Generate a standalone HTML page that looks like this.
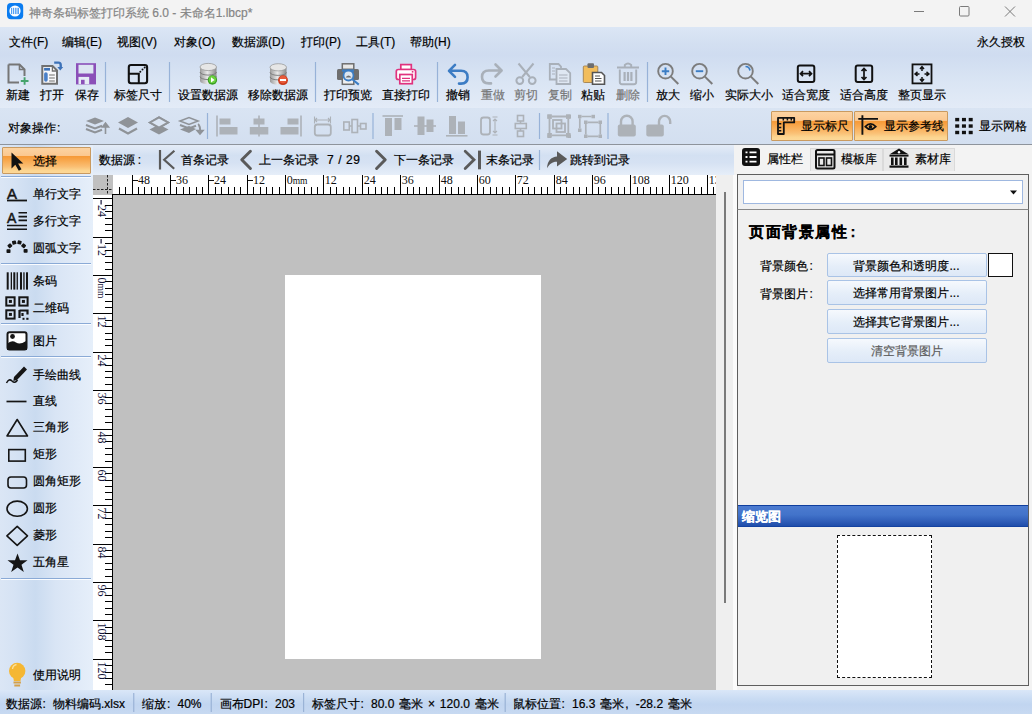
<!DOCTYPE html><html><head><meta charset="utf-8"><style>
html,body{margin:0;padding:0;width:1032px;height:714px;overflow:hidden;font-family:"Liberation Sans", sans-serif;background:#dde7f4;position:relative}
.t{position:absolute;white-space:nowrap;-webkit-text-stroke:0.2px currentColor}.b{position:absolute}.c{display:inline-block;width:5px}
svg{position:absolute;left:0;top:0}
</style></head><body>
<div class="b" style="left:0px;top:0px;width:1032px;height:27px;background:#f3f3f3"></div>
<div class="b" style="left:0px;top:27px;width:1032px;height:28px;background:linear-gradient(#dbe6f5,#d3dff1 60%,#cfdcf0)"></div>
<div class="b" style="left:0px;top:55px;width:1032px;height:53px;background:linear-gradient(#cfdcf0,#dae5f4 50%,#e3ebf7)"></div>
<div class="b" style="left:0px;top:108px;width:1032px;height:36px;background:linear-gradient(#d9e4f3,#d3dff0)"></div>
<div class="b" style="left:0px;top:144px;width:1032px;height:1px;background:#8e949c"></div>
<div class="b" style="left:0px;top:145px;width:1032px;height:545px;background:#dde7f4"></div>
<div class="b" style="left:0px;top:145px;width:93px;height:545px;background:linear-gradient(90deg,#dbe6f5 0%,#d6e3f4 15%,#cadbf0 38%,#d9e5f5 60%,#e1ebf8 85%,#e6effa 100%)"></div>
<div class="b" style="left:93px;top:145px;width:641px;height:30px;background:linear-gradient(#e4ecf7 0%,#d3e0f2 35%,#d6e2f3 60%,#e6eef9 100%)"></div>
<div class="b" style="left:113px;top:194px;width:603px;height:496px;background:#c0c0c0"></div>
<div class="b" style="left:716px;top:175px;width:18px;height:515px;background:#efefef"></div>
<div class="b" style="left:734px;top:145px;width:298px;height:545px;background:#f3f3f3"></div>
<div class="b" style="left:0px;top:690px;width:1032px;height:24px;background:linear-gradient(#dae7f8 0%,#cadcf3 35%,#c1d5f0 60%,#c7d9f1 100%)"></div>
<div class="b" style="left:770.5px;top:110.5px;width:82px;height:30.5px;background:linear-gradient(#fcd3a2 0%,#fbc890 30%,#f69a38 34%,#f8a84e 50%,#fabf74 75%,#fcd590 90%,#fdd898 100%);border:1px solid #c99a60;box-sizing:border-box;border-radius:1px"></div>
<div class="b" style="left:853.5px;top:110.5px;width:94px;height:30.5px;background:linear-gradient(#fcd3a2 0%,#fbc890 30%,#f69a38 34%,#f8a84e 50%,#fabf74 75%,#fcd590 90%,#fdd898 100%);border:1px solid #c99a60;box-sizing:border-box;border-radius:1px"></div>
<div class="b" style="left:1.5px;top:147.3px;width:89px;height:26.3px;background:linear-gradient(#fcd3a2 0%,#fbc890 30%,#f69a38 34%,#f8a84e 50%,#fabf74 75%,#fcd590 90%,#fdd898 100%);border:1px solid #c99a60;box-sizing:border-box;border-radius:1px"></div>
<div class="b" style="left:810px;top:147.5px;width:72.5px;height:23px;background:#eaeaea;border:1px solid #dadada;border-bottom:none;box-sizing:border-box"></div>
<div class="b" style="left:882.5px;top:147.5px;width:72px;height:23px;background:#eaeaea;border:1px solid #dadada;border-bottom:none;box-sizing:border-box"></div>
<div class="b" style="left:737px;top:174px;width:292px;height:512px;border:1px solid #5e5e5e;box-sizing:border-box;background:#f0f0f0"></div>
<div class="b" style="left:743px;top:180px;width:280px;height:24px;border:1px solid #9fb8e0;box-sizing:border-box;background:#fff"></div>
<div class="b" style="left:826.5px;top:252.5px;width:160.5px;height:24.5px;border:1px solid #a9c3e6;box-sizing:border-box;border-radius:2px;background:linear-gradient(#f6f9fd,#e5eef9 55%,#dde8f7)"></div>
<div class="b" style="left:826.5px;top:280.3px;width:160.5px;height:24.5px;border:1px solid #a9c3e6;box-sizing:border-box;border-radius:2px;background:linear-gradient(#f6f9fd,#e5eef9 55%,#dde8f7)"></div>
<div class="b" style="left:826.5px;top:309.2px;width:160.5px;height:24.5px;border:1px solid #a9c3e6;box-sizing:border-box;border-radius:2px;background:linear-gradient(#f6f9fd,#e5eef9 55%,#dde8f7)"></div>
<div class="b" style="left:826.5px;top:338px;width:160.5px;height:24.5px;border:1px solid #a9c3e6;box-sizing:border-box;border-radius:2px;background:linear-gradient(#f6f9fd,#e5eef9 55%,#dde8f7)"></div>
<div class="b" style="left:988px;top:252.5px;width:25px;height:24.5px;border:1.3px solid #111;box-sizing:border-box;background:#fff"></div>
<div class="b" style="left:738px;top:505px;width:290px;height:22px;background:linear-gradient(#0f3e9e 0,#0f3e9e 1px,#4c7bd0 1px,#4273ca 45%,#2f5db8 75%,#1f4eab 95%,#0a3898 100%)"></div>
<div class="b" style="left:836.5px;top:535px;width:95px;height:143px;border:1.3px dashed #111;box-sizing:border-box;background:#fff"></div>
<svg width="1032" height="714" viewBox="0 0 1032 714">
<rect x="7" y="3" width="16.2" height="16.2" rx="4" fill="#0a7cf0"/><circle cx="15" cy="11" r="5.6" fill="#fff"/><path d="M11.6 7.8v6.3M13.4 7.8v6.3M15.3 7.8v6.3M17 7.8v6.3M18.4 7.8v6.3" stroke="#2a8af2" stroke-width="0.9"/>
<path d="M914 11.5h10" stroke="#7a7a7a" stroke-width="1"/><rect x="959.5" y="6.5" width="9.5" height="9.5" rx="1" fill="none" stroke="#7a7a7a" stroke-width="1"/><path d="M1005 6.5l10 10M1015 6.5l-10 10" stroke="#7a7a7a" stroke-width="1"/>
<path d="M105.5 62v40" stroke="#97b2d8" stroke-width="1.2"/>
<path d="M169.5 62v40" stroke="#97b2d8" stroke-width="1.2"/>
<path d="M315.5 62v40" stroke="#97b2d8" stroke-width="1.2"/>
<path d="M437.5 62v40" stroke="#97b2d8" stroke-width="1.2"/>
<path d="M647.5 62v40" stroke="#97b2d8" stroke-width="1.2"/>
<path d="M8.5 64.5H19.5L24.5 69.5V76M19 82.5H8.5V64.5" fill="none" stroke="#767676" stroke-width="2"/><path d="M19.5 64.5V69.5H24.5" fill="none" stroke="#767676" stroke-width="1.6"/><path d="M20.8 81H28.5M24.6 77.2V84.8" stroke="#46a46c" stroke-width="1.9"/>
<path d="M42.3 65.9H52.5L57 70.5V83.7H42.3Z" fill="#f8f8fa" stroke="#707070" stroke-width="2"/><path d="M52.4 66V71H57" fill="none" stroke="#707070" stroke-width="1.3"/><rect x="44.1" y="67.9" width="5.9" height="2.7" fill="#3d72b8"/><rect x="44.1" y="72.3" width="3.6" height="9.4" rx="1.8" fill="#4a80c8"/><path d="M49.1 75H54.8M49.1 78.1H54.8M49.1 80.9H54.8" stroke="#9c9c9c" stroke-width="1.5"/><path d="M54.2 62.6H58.5Q60.7 62.6 60.7 65V67.5" fill="none" stroke="#3d72b8" stroke-width="2.4"/><path d="M57.3 67H63.2L60.25 70.6Z" fill="#3d72b8"/>
<rect x="76" y="63.2" width="20" height="21.2" fill="#8b4fb8"/><rect x="78.5" y="64.8" width="14.9" height="8.7" fill="#dde5f2"/><rect x="78.5" y="76.9" width="10.7" height="7.3" fill="#e6ecf5"/><rect x="81" y="79.8" width="3.6" height="4.4" fill="#8b4fb8"/>
<rect x="128.8" y="65" width="18.3" height="18.2" rx="2.2" fill="none" stroke="#111" stroke-width="2.1"/><path d="M128.5 73.8H138.8V84" fill="none" stroke="#111" stroke-width="2"/><circle cx="144.7" cy="67.4" r="1" fill="#111"/><circle cx="142.5" cy="69.6" r="1" fill="#111"/><circle cx="140.3" cy="71.8" r="1" fill="#111"/>
<defs><linearGradient id="dbg200" x1="0" x2="1"><stop offset="0" stop-color="#9a9a9a"/><stop offset="0.45" stop-color="#e8e8e8"/><stop offset="1" stop-color="#8a8a8a"/></linearGradient></defs><path d="M200 67v14a8 3.2 0 0 0 16.5 0v-14Z" fill="url(#dbg200)"/><path d="M200 72a8 3 0 0 0 16.5 0M200 76.5a8 3 0 0 0 16.5 0" fill="none" stroke="#777" stroke-width="0.9"/><ellipse cx="208.25" cy="67" rx="8.25" ry="3.6" fill="#e6e6e6" stroke="#9a9a9a" stroke-width="0.8"/>
<circle cx="212.4" cy="80" r="4.7" fill="#3aa023"/><circle cx="212.4" cy="79.4" r="3.6" fill="#6cd040"/><path d="M211 77.3L214.6 79.9L211 82.5Z" fill="#fff"/>
<defs><linearGradient id="dbg270" x1="0" x2="1"><stop offset="0" stop-color="#9a9a9a"/><stop offset="0.45" stop-color="#e8e8e8"/><stop offset="1" stop-color="#8a8a8a"/></linearGradient></defs><path d="M270 67.3v14a8 3.2 0 0 0 16.5 0v-14Z" fill="url(#dbg270)"/><path d="M270 72.3a8 3 0 0 0 16.5 0M270 76.8a8 3 0 0 0 16.5 0" fill="none" stroke="#777" stroke-width="0.9"/><ellipse cx="278.25" cy="67.3" rx="8.25" ry="3.6" fill="#e6e6e6" stroke="#9a9a9a" stroke-width="0.8"/>
<circle cx="283" cy="80.2" r="4.9" fill="#c8381a"/><circle cx="283" cy="79.6" r="3.8" fill="#e85a3a"/><rect x="280" y="79" width="6" height="2" fill="#fff"/>
<rect x="342.3" y="63.8" width="11.5" height="5.5" fill="#e8e8e8" stroke="#6e6e6e" stroke-width="1.5"/><rect x="337" y="69" width="22" height="11" rx="1.5" fill="#6e6e6e"/><rect x="342" y="69.5" width="12" height="2.2" fill="#3b7dc4"/><rect x="342.3" y="74" width="11.5" height="10.3" fill="#f0f0f0" stroke="#6e6e6e" stroke-width="1.5"/><circle cx="348.5" cy="75.5" r="5" fill="#dde6f0" stroke="#3b7dc4" stroke-width="1.8"/><path d="M352.3 79.3L358.8 84.6" stroke="#3b7dc4" stroke-width="2"/><path d="M345.5 77.5q3-4 6 0" fill="#6e6e6e"/>
<rect x="400.8" y="64.6" width="10.5" height="5" fill="#fff" stroke="#e0327e" stroke-width="1.7"/><rect x="396.3" y="69.5" width="19.3" height="10" rx="2" fill="#fff" stroke="#e0327e" stroke-width="1.7"/><rect x="399.8" y="74.5" width="12.5" height="9.2" fill="#fff" stroke="#e0327e" stroke-width="1.7"/><path d="M402 78.3H410M402 80.8H410" stroke="#e0327e" stroke-width="1.3"/><rect x="411.8" y="71" width="1.6" height="1.6" fill="#e0327e"/>
<path d="M455 64.8L449 70.8L455 76.8M449.5 70.8H461Q467.6 70.8 467.6 77.2Q467.6 83.6 461 83.6H459" fill="none" stroke="#3c7cc4" stroke-width="2.6" stroke-linecap="round" stroke-linejoin="round"/>
<path d="M495.5 64.5L501.6 70.5L495.5 76.5M501 70.5H489Q482 70.5 482 77Q482 83.4 489 83.4H491" fill="none" stroke="#a9b0b9" stroke-width="2.6" stroke-linecap="round" stroke-linejoin="round"/>
<path d="M518.5 63.5L529.8 77M533.5 63.5L522.2 77" stroke="#a9b0b9" stroke-width="2"/><circle cx="519.8" cy="80.6" r="3.4" fill="none" stroke="#a9b0b9" stroke-width="2"/><circle cx="532.2" cy="80.6" r="3.4" fill="none" stroke="#a9b0b9" stroke-width="2"/>
<path d="M549.8 64H558.5L561 66.5V79.5H549.8Z" fill="none" stroke="#a9b0b9" stroke-width="1.8"/><path d="M552 68H555M552 71H555M552 74H555" stroke="#a9b0b9" stroke-width="1.2"/><path d="M556.5 69H566L570.2 73.2V84H556.5Z" fill="#dfe7f2" stroke="#a9b0b9" stroke-width="1.8"/><path d="M559 75H567.5M559 78H567.5M559 81H567.5" stroke="#a9b0b9" stroke-width="1.2"/>
<rect x="583.3" y="66" width="14.5" height="16.5" rx="1" fill="#f2bd5c" stroke="#a08050" stroke-width="0.9"/><rect x="587.5" y="63.2" width="6.5" height="4.8" rx="1" fill="#6e6e6e"/><path d="M592.5 72.5H601.5L604.5 75.5V84.2H592.5Z" fill="#fff" stroke="#555" stroke-width="1.6"/><path d="M595 76H600M595 78.5H601.5M595 81H601.5" stroke="#555" stroke-width="1.1"/>
<path d="M617 67.5H639M624.8 67.2V65Q628 61.8 631.2 65V67.2" fill="none" stroke="#a9b0b9" stroke-width="1.9"/><path d="M619.8 69.5V82Q619.8 84.2 622 84.2H634Q636.2 84.2 636.2 82V69.5" fill="none" stroke="#a9b0b9" stroke-width="1.9"/><path d="M624.6 72V81M628 72V81M631.4 72V81" stroke="#a9b0b9" stroke-width="2.2"/>
<circle cx="665.5" cy="71.2" r="7.3" fill="none" stroke="#7c7c7c" stroke-width="1.9"/><path d="M670.9 76.6L678.3 84" stroke="#7c7c7c" stroke-width="2"/><path d="M661.8 71.2H669.2M665.5 67.5V74.9" stroke="#3b7dc4" stroke-width="1.9"/>
<circle cx="699.5" cy="71.2" r="7.3" fill="none" stroke="#7c7c7c" stroke-width="1.9"/><path d="M704.9 76.6L712.3 84" stroke="#7c7c7c" stroke-width="2"/><path d="M695.8 71.2H703.2" stroke="#3b7dc4" stroke-width="1.9"/>
<circle cx="745.5" cy="71.2" r="7.3" fill="none" stroke="#7c7c7c" stroke-width="1.9"/><path d="M750.9 76.6L758.3 84" stroke="#7c7c7c" stroke-width="2"/><path d="M745.5 66.5A4.7 4.7 0 0 1 750 70.5" fill="none" stroke="#3b7dc4" stroke-width="1.7"/>
<rect x="797.8" y="65.5" width="16.5" height="16.5" rx="2" fill="none" stroke="#111" stroke-width="2"/><path d="M800.5 73.7H811.5M803 71.2L800.5 73.7L803 76.2M809 71.2L811.5 73.7L809 76.2" fill="none" stroke="#111" stroke-width="1.7"/>
<rect x="855.7" y="65.6" width="16.5" height="16.5" rx="2" fill="none" stroke="#111" stroke-width="2"/><path d="M864 68.5V79.5M861.5 71L864 68.5L866.5 71M861.5 77L864 79.5L866.5 77" fill="none" stroke="#111" stroke-width="1.7"/>
<rect x="912.5" y="64.4" width="19" height="19" fill="none" stroke="#111" stroke-width="1.8"/><path d="M922 67v4M920 69l2-2.4 2 2.4M922 77v4M920 79l2 2.4 2-2.4M915.5 73.9h4M917.5 71.9l-2.4 2 2.4 2M924.5 73.9h4M926.5 71.9l2.4 2-2.4 2" fill="none" stroke="#111" stroke-width="1.5"/>
<path d="M207.5 113v26" stroke="#97b2d8" stroke-width="1.2"/>
<path d="M373 113v26" stroke="#97b2d8" stroke-width="1.2"/>
<path d="M539.5 113v26" stroke="#97b2d8" stroke-width="1.2"/>
<path d="M608 113v26" stroke="#97b2d8" stroke-width="1.2"/>
<path d="M86 121L95 117.5L104 121L95 124.5Z" fill="#8f9398"/><path d="M86 125L95 128.5L102 125.8" fill="none" stroke="#8f9398" stroke-width="2"/><path d="M86 129L95 132.5L102 129.8" fill="none" stroke="#8f9398" stroke-width="2"/><path d="M105.5 134V124M102.5 127L105.5 123L108.5 127Z" fill="#8f9398" stroke="#8f9398" stroke-width="1.6"/>
<path d="M118 122.5L128 117L138 122.5L128 128Z" fill="#8f9398"/><path d="M119 128.5L128 133.5L137 128.5" fill="none" stroke="#8f9398" stroke-width="2.2"/>
<path d="M150 122.5L159 117.5L168 122.5L159 127.5Z" fill="none" stroke="#8f9398" stroke-width="2"/><path d="M149.5 129.5L159 124.5L168.5 129.5L159 134.5Z" fill="#8f9398"/><path d="M150 122.5L159 117.5L168 122.5L159 127.5Z" fill="#dbe5f3" stroke="#8f9398" stroke-width="2"/>
<path d="M180 121L189 117.5L198 121L189 124.5Z" fill="none" stroke="#8f9398" stroke-width="1.6"/><path d="M180 125L189 128.5L196 125.8" fill="none" stroke="#8f9398" stroke-width="2"/><path d="M180 129.5L189 126L196 129L189 133Z" fill="#8f9398"/><path d="M198 124Q201 126 200 133M197 130.5L200 134L203 130.5Z" fill="#8f9398" stroke="#8f9398" stroke-width="1.6"/>
<path d="M217 115.5V136.5" stroke="#adb2b8" stroke-width="1.6"/><rect x="219.5" y="118.5" width="11" height="6" fill="#adb2b8"/><rect x="219.5" y="127" width="18" height="7.5" fill="#adb2b8"/>
<path d="M259 115.5V136.5" stroke="#adb2b8" stroke-width="1.6"/><rect x="253.5" y="118.5" width="11" height="6" fill="#adb2b8"/><rect x="249.8" y="127" width="18.5" height="7.5" fill="#adb2b8"/>
<path d="M301 115.5V136.5" stroke="#adb2b8" stroke-width="1.6"/><rect x="287.5" y="118.5" width="11" height="6" fill="#adb2b8"/><rect x="280.5" y="127" width="18" height="7.5" fill="#adb2b8"/>
<path d="M315 120H330M317 118L315 120L317 122M328 118L330 120L328 122M314.5 116.5V123.5M330.5 116.5V123.5" fill="none" stroke="#adb2b8" stroke-width="1.1"/><rect x="314.8" y="124.5" width="16" height="11" rx="2.5" fill="none" stroke="#adb2b8" stroke-width="1.8"/>
<rect x="343.8" y="122" width="5.5" height="8" fill="none" stroke="#adb2b8" stroke-width="1.6"/><rect x="352" y="119.5" width="5.5" height="13" fill="none" stroke="#adb2b8" stroke-width="1.6"/><rect x="360.5" y="123.5" width="5.5" height="5.5" fill="none" stroke="#adb2b8" stroke-width="1.6"/><path d="M349.3 126H352M357.5 126H360.5" stroke="#adb2b8" stroke-width="1.6"/>
<path d="M382.5 116H403" stroke="#adb2b8" stroke-width="1.6"/><rect x="385" y="118" width="7" height="18" fill="#adb2b8"/><rect x="394.5" y="118" width="7" height="12" fill="#adb2b8"/>
<path d="M414 126H436" stroke="#adb2b8" stroke-width="1.6"/><rect x="417.5" y="116.5" width="7" height="18.5" fill="#adb2b8"/><rect x="426.5" y="119.5" width="7" height="12.5" fill="#adb2b8"/>
<path d="M446 135.8H467.5" stroke="#adb2b8" stroke-width="1.6"/><rect x="449" y="116" width="7" height="18" fill="#adb2b8"/><rect x="458" y="121.5" width="7" height="12.5" fill="#adb2b8"/>
<rect x="481" y="117.5" width="9" height="17" rx="2.5" fill="none" stroke="#adb2b8" stroke-width="1.8"/><path d="M495 119V133M493 121L495 119L497 121M493 131L495 133L497 131M492.5 117H497.5M492.5 135H497.5" fill="none" stroke="#adb2b8" stroke-width="1.1"/>
<rect x="517.5" y="115.5" width="6" height="5.5" fill="none" stroke="#adb2b8" stroke-width="1.6"/><rect x="515.3" y="123.5" width="11" height="5" fill="none" stroke="#adb2b8" stroke-width="1.6"/><rect x="517.5" y="131" width="6" height="5.5" fill="none" stroke="#adb2b8" stroke-width="1.6"/><path d="M520.5 121V123.5M520.5 128.5V131" stroke="#adb2b8" stroke-width="1.6"/>
<rect x="547.5" y="114.8" width="3.5" height="3.5" fill="#adb2b8"/><rect x="567.5" y="114.8" width="3.5" height="3.5" fill="#adb2b8"/><rect x="547.5" y="134.5" width="3.5" height="3.5" fill="#adb2b8"/><rect x="567.5" y="134.5" width="3.5" height="3.5" fill="#adb2b8"/><rect x="547.3" y="114.3" width="4.6" height="4.6" fill="#adb2b8"/><rect x="566" y="114.3" width="4.6" height="4.6" fill="#adb2b8"/><rect x="547.3" y="133" width="4.6" height="4.6" fill="#adb2b8"/><rect x="566" y="133" width="4.6" height="4.6" fill="#adb2b8"/><path d="M549.5 119V133M568.3 119V133M552 116.5H566M552 135.3H566" stroke="#adb2b8" stroke-width="1.8"/><rect x="553" y="120" width="8.5" height="8.5" fill="none" stroke="#adb2b8" stroke-width="1.8"/><rect x="556.5" y="123.5" width="8.5" height="8.5" fill="none" stroke="#adb2b8" stroke-width="1.8"/>
<rect x="578" y="114.8" width="3.5" height="3.5" fill="#adb2b8"/><rect x="591.5" y="114.8" width="3.5" height="3.5" fill="#adb2b8"/><rect x="578" y="128.5" width="3.5" height="3.5" fill="#adb2b8"/><path d="M579.8 118.3V128.5M581.5 116.5H591.5" stroke="#adb2b8" stroke-width="1.7"/><rect x="584" y="120.5" width="3.5" height="3.5" fill="#adb2b8"/><rect x="598.5" y="120.5" width="3.5" height="3.5" fill="#adb2b8"/><rect x="584" y="134.5" width="3.5" height="3.5" fill="#adb2b8"/><rect x="598.5" y="134.5" width="3.5" height="3.5" fill="#adb2b8"/><path d="M585.8 124V134.5M600.3 124V134.5M587.5 122.3H598.5M587.5 136.3H598.5" stroke="#adb2b8" stroke-width="1.7"/>
<path d="M621 125V121.5A5.8 5.8 0 0 1 632.6 121.5V125" fill="none" stroke="#adb2b8" stroke-width="2.4"/><rect x="617.8" y="124.5" width="18" height="12" rx="2" fill="#adb2b8"/>
<path d="M659 125V121.5A5.6 5.6 0 0 1 670.2 121.5V124" fill="none" stroke="#adb2b8" stroke-width="2.4"/><rect x="646.3" y="124.5" width="17.5" height="12" rx="2" fill="#adb2b8"/>
<path d="M778 117.8H794.2V122.4H783.8V134H778Z" fill="none" stroke="#111" stroke-width="1.8" stroke-linejoin="round"/><path d="M783.3 118v2.6M787.4 118v2.6M791.3 118v2.6M778.5 123.7h2.8M778.5 127.4h2.8M778.5 130.7h2.8" stroke="#111" stroke-width="1.5"/>
<path d="M862.4 115.3V134.8M858.3 118.9H878" stroke="#111" stroke-width="1.9"/><path d="M865.3 126.7Q870.5 121.2 875.8 126.7Q870.5 132.2 865.3 126.7Z" fill="none" stroke="#111" stroke-width="1.7"/><circle cx="870.5" cy="126.7" r="1.8" fill="#111"/>
<rect x="955.20" y="117.90" width="4" height="3.4" fill="#111"/>
<rect x="955.20" y="124.35" width="4" height="3.4" fill="#111"/>
<rect x="955.20" y="130.80" width="4" height="3.4" fill="#111"/>
<rect x="961.95" y="117.90" width="4" height="3.4" fill="#111"/>
<rect x="961.95" y="124.35" width="4" height="3.4" fill="#111"/>
<rect x="961.95" y="130.80" width="4" height="3.4" fill="#111"/>
<rect x="968.70" y="117.90" width="4" height="3.4" fill="#111"/>
<rect x="968.70" y="124.35" width="4" height="3.4" fill="#111"/>
<rect x="968.70" y="130.80" width="4" height="3.4" fill="#111"/>
<path d="M11.5 152.5V168.5L15.3 164.8L18.8 170.8L21.5 169.3L18.1 163.5H23.3Z" fill="#111"/>
<path d="M1 176.5H91" stroke="#8aaad6" stroke-width="1"/><path d="M1 177.5H91" stroke="#fafcff" stroke-width="1"/>
<path d="M1 263.5H91" stroke="#8aaad6" stroke-width="1"/><path d="M1 264.5H91" stroke="#fafcff" stroke-width="1"/>
<path d="M1 323.5H91" stroke="#8aaad6" stroke-width="1"/><path d="M1 324.5H91" stroke="#fafcff" stroke-width="1"/>
<path d="M1 356.5H91" stroke="#8aaad6" stroke-width="1"/><path d="M1 357.5H91" stroke="#fafcff" stroke-width="1"/>
<path d="M1 578.5H91" stroke="#8aaad6" stroke-width="1"/><path d="M1 579.5H91" stroke="#fafcff" stroke-width="1"/>
<text x="7" y="198.5" font-family="Liberation Sans" font-size="15" fill="#151515" stroke="#151515" stroke-width="0.5">A</text><path d="M7 200.5H27" stroke="#151515" stroke-width="1.8"/>
<text x="7" y="223" font-family="Liberation Sans" font-size="14" fill="#151515" stroke="#151515" stroke-width="0.5">A</text><path d="M18.5 212.8H27M18.5 216.6H27M18.5 220.4H27M7 225.5H27M7 229.3H27" stroke="#151515" stroke-width="1.6"/>
<rect x="6.5" y="249.2" width="4" height="3.8" rx="0.8" fill="#151515" transform="rotate(0 8.5 251.1)"/>
<rect x="7.9" y="243.9" width="4" height="3.8" rx="0.8" fill="#151515" transform="rotate(-40 9.9 245.8)"/>
<rect x="12.2" y="240.7" width="4" height="3.8" rx="0.8" fill="#151515" transform="rotate(-15 14.2 242.6)"/>
<rect x="17.5" y="240.5" width="4" height="3.8" rx="0.8" fill="#151515" transform="rotate(15 19.5 242.4)"/>
<rect x="21.6" y="243.9" width="4" height="3.8" rx="0.8" fill="#151515" transform="rotate(40 23.6 245.8)"/>
<rect x="23.6" y="248.9" width="4" height="3.8" rx="0.8" fill="#151515" transform="rotate(0 25.6 250.8)"/>
<rect x="6.7" y="272.3" width="2" height="17.3" fill="#151515"/>
<rect x="10.7" y="272.3" width="1.3" height="17.3" fill="#151515"/>
<rect x="13.3" y="272.3" width="2" height="17.3" fill="#151515"/>
<rect x="16.6" y="272.3" width="1.3" height="17.3" fill="#151515"/>
<rect x="20" y="272.3" width="2" height="17.3" fill="#151515"/>
<rect x="23.3" y="272.3" width="1.3" height="17.3" fill="#151515"/>
<rect x="26" y="272.3" width="2" height="17.3" fill="#151515"/>
<rect x="6.3" y="297.3" width="8.3" height="8.3" fill="none" stroke="#151515" stroke-width="2"/><rect x="8.9" y="299.90000000000003" width="3" height="3" fill="#151515"/>
<rect x="19.3" y="297.3" width="8.3" height="8.3" fill="none" stroke="#151515" stroke-width="2"/><rect x="21.900000000000002" y="299.90000000000003" width="3" height="3" fill="#151515"/>
<rect x="6.3" y="310.3" width="8.3" height="8.3" fill="none" stroke="#151515" stroke-width="2"/><rect x="8.9" y="312.90000000000003" width="3" height="3" fill="#151515"/>
<path d="M19.5 310V318M19.5 310.5H27.5V314.5M22.5 313V316" fill="none" stroke="#151515" stroke-width="2.2"/><rect x="22.5" y="317.8" width="2" height="2" fill="#151515"/><rect x="26.3" y="317.8" width="2.2" height="2" fill="#151515"/>
<rect x="7.5" y="332.3" width="19" height="17.3" rx="2" fill="#fff" stroke="#151515" stroke-width="2"/><path d="M7 350V344Q11.5 339.5 16 342.5Q20.5 345 27 340.5V350Z" fill="#151515"/><circle cx="12.5" cy="336.5" r="2.4" fill="#151515"/>
<path d="M14 377L24 366.5L27 369.5L17 380L13.3 381Z" fill="#151515"/><path d="M6.5 383Q9 378 12 381Q15 384 17.5 380" fill="none" stroke="#151515" stroke-width="1.5"/>
<path d="M6.5 401.5H26.5" stroke="#151515" stroke-width="1.7"/>
<path d="M17.2 419.5L27.5 436H7Z" fill="none" stroke="#151515" stroke-width="1.6" stroke-linejoin="round"/>
<rect x="8.8" y="449.6" width="16.5" height="11.5" fill="none" stroke="#151515" stroke-width="1.6"/>
<rect x="8" y="477" width="18.5" height="11" rx="3" fill="none" stroke="#151515" stroke-width="1.6"/>
<ellipse cx="17.2" cy="508.7" rx="10.2" ry="7.6" fill="none" stroke="#151515" stroke-width="1.6"/>
<path d="M17.2 526.3L27.5 535.8L17.2 545.3L6.9 535.8Z" fill="none" stroke="#151515" stroke-width="1.6" stroke-linejoin="round"/>
<path d="M17.5 553.5L20 560.3H27.5L21.5 564.7L23.8 572L17.5 567.5L11.2 572L13.5 564.7L7.5 560.3H15Z" fill="#151515"/>
<circle cx="17.2" cy="671" r="8.2" fill="#f5b733"/><path d="M13 676H21.4L20.5 681H13.9Z" fill="#f5b733"/><rect x="13.5" y="681.5" width="7.4" height="2" fill="#d4a04a"/><rect x="14.3" y="684.5" width="5.8" height="2" fill="#d4a04a"/><path d="M12.5 669a5 5 0 0 1 4-4.5" fill="none" stroke="#fbe09a" stroke-width="1.3"/>
<path d="M160 150V169.5" stroke="#5a5a5a" stroke-width="2.2"/><path d="M174.4 150.8L164.2 159.8L174.2 168.8" fill="none" stroke="#5a5a5a" stroke-width="2.2"/>
<path d="M250.4 151.3L241.8 159.8L250.4 168.5" fill="none" stroke="#5a5a5a" stroke-width="3" stroke-linejoin="round" stroke-linecap="round"/>
<path d="M376.6 151.3L385.2 159.8L376.6 168.5" fill="none" stroke="#5a5a5a" stroke-width="3" stroke-linejoin="round" stroke-linecap="round"/>
<path d="M465.2 151.3L474 159.8L465.2 168.5" fill="none" stroke="#5a5a5a" stroke-width="2.8" stroke-linecap="round"/><path d="M479.5 150.6V169.3" stroke="#5a5a5a" stroke-width="3"/>
<path d="M539.5 150v20" stroke="#97b2d8" stroke-width="1.2"/>
<path d="M547 168.2C547.5 160.5 551.5 157 557 156.6V151.3L567.2 159L557 166.6V161.8C552.5 161.6 549.5 164 547 168.2Z" fill="#5a5a5a"/>
<rect x="113" y="175" width="603" height="19" fill="#fff"/><rect x="93" y="194" width="20" height="496" fill="#fff"/><rect x="93" y="175" width="20" height="20" fill="#c0c0c0"/><path d="M107.5 175V194M93 189.5H113" stroke="#222" stroke-width="1" stroke-dasharray="2.5 1.5"/><path d="M113 194.5H716M112.5 194V690" stroke="#000" stroke-width="1"/>
<path d="M119.5 187V194M125.5 187V194M132.5 175V194M138.5 187V194M144.5 187V194M151.5 187V194M157.5 187V194M164.5 187V194M170.5 175V194M176.5 187V194M183.5 187V194M189.5 187V194M196.5 187V194M202.5 187V194M208.5 175V194M215.5 187V194M221.5 187V194M228.5 187V194M234.5 187V194M240.5 187V194M247.5 175V194M253.5 187V194M260.5 187V194M266.5 187V194M272.5 187V194M279.5 187V194M285.5 175V194M291.5 187V194M298.5 187V194M304.5 187V194M311.5 187V194M317.5 187V194M323.5 175V194M330.5 187V194M336.5 187V194M343.5 187V194M349.5 187V194M355.5 187V194M362.5 175V194M368.5 187V194M375.5 187V194M381.5 187V194M387.5 187V194M394.5 187V194M400.5 175V194M407.5 187V194M413.5 187V194M419.5 187V194M426.5 187V194M432.5 187V194M439.5 175V194M445.5 187V194M451.5 187V194M458.5 187V194M464.5 187V194M471.5 187V194M477.5 175V194M483.5 187V194M490.5 187V194M496.5 187V194M502.5 187V194M509.5 187V194M515.5 175V194M522.5 187V194M528.5 187V194M534.5 187V194M541.5 187V194M547.5 187V194M554.5 175V194M560.5 187V194M566.5 187V194M573.5 187V194M579.5 187V194M586.5 187V194M592.5 175V194M598.5 187V194M605.5 187V194M611.5 187V194M618.5 187V194M624.5 187V194M630.5 175V194M637.5 187V194M643.5 187V194M650.5 187V194M656.5 187V194M662.5 187V194M669.5 175V194M675.5 187V194M682.5 187V194M688.5 187V194M694.5 187V194M701.5 187V194M707.5 175V194M713.5 187V194M93 198.5H113M105 205.5H113M105 211.5H113M105 218.5H113M105 224.5H113M105 230.5H113M93 237.5H113M105 243.5H113M105 250.5H113M105 256.5H113M105 262.5H113M105 269.5H113M93 275.5H113M105 281.5H113M105 288.5H113M105 294.5H113M105 301.5H113M105 307.5H113M93 313.5H113M105 320.5H113M105 326.5H113M105 333.5H113M105 339.5H113M105 345.5H113M93 352.5H113M105 358.5H113M105 365.5H113M105 371.5H113M105 377.5H113M105 384.5H113M93 390.5H113M105 397.5H113M105 403.5H113M105 409.5H113M105 416.5H113M105 422.5H113M93 429.5H113M105 435.5H113M105 441.5H113M105 448.5H113M105 454.5H113M105 461.5H113M93 467.5H113M105 473.5H113M105 480.5H113M105 486.5H113M105 492.5H113M105 499.5H113M93 505.5H113M105 512.5H113M105 518.5H113M105 524.5H113M105 531.5H113M105 537.5H113M93 544.5H113M105 550.5H113M105 556.5H113M105 563.5H113M105 569.5H113M105 576.5H113M93 582.5H113M105 588.5H113M105 595.5H113M105 601.5H113M105 608.5H113M105 614.5H113M93 620.5H113M105 627.5H113M105 633.5H113M105 640.5H113M105 646.5H113M105 652.5H113M93 659.5H113M105 665.5H113M105 672.5H113M105 678.5H113M105 684.5H113" stroke="#000" stroke-width="1"/>
<clipPath id="topr"><rect x="113" y="175" width="603" height="19"/></clipPath><g clip-path="url(#topr)" fill="#111">
<rect x="133.0" y="180" width="5" height="1" fill="#111"/><text x="138.0" y="184" font-family="Liberation Serif" font-size="12">48</text>
<rect x="171.0" y="180" width="5" height="1" fill="#111"/><text x="176.0" y="184" font-family="Liberation Serif" font-size="12">36</text>
<rect x="209.0" y="180" width="5" height="1" fill="#111"/><text x="214.0" y="184" font-family="Liberation Serif" font-size="12">24</text>
<rect x="248.0" y="180" width="5" height="1" fill="#111"/><text x="253.0" y="184" font-family="Liberation Serif" font-size="12">12</text>
<text x="286.7" y="184" font-family="Liberation Serif" font-size="12">0<tspan font-size="9.5">mm</tspan></text>
<text x="324.7" y="184" font-family="Liberation Serif" font-size="12">12</text>
<text x="363.7" y="184" font-family="Liberation Serif" font-size="12">24</text>
<text x="401.7" y="184" font-family="Liberation Serif" font-size="12">36</text>
<text x="440.7" y="184" font-family="Liberation Serif" font-size="12">48</text>
<text x="478.7" y="184" font-family="Liberation Serif" font-size="12">60</text>
<text x="516.7" y="184" font-family="Liberation Serif" font-size="12">72</text>
<text x="555.7" y="184" font-family="Liberation Serif" font-size="12">84</text>
<text x="593.7" y="184" font-family="Liberation Serif" font-size="12">96</text>
<text x="631.7" y="184" font-family="Liberation Serif" font-size="12">108</text>
<text x="670.7" y="184" font-family="Liberation Serif" font-size="12">120</text>
<text x="708.7" y="184" font-family="Liberation Serif" font-size="12">132</text>
</g>
<g fill="#15153a">
<rect x="100.5" y="200.0" width="1.2" height="4.5"/><text transform="translate(97.8 205.0) rotate(90)" font-family="Liberation Serif" font-size="12">24</text>
<rect x="100.5" y="239.0" width="1.2" height="4.5"/><text transform="translate(97.8 244.0) rotate(90)" font-family="Liberation Serif" font-size="12">12</text>
<text transform="translate(97.8 277.5) rotate(90)" font-family="Liberation Serif" font-size="12">0<tspan font-size="9.5">mm</tspan></text>
<text transform="translate(97.8 315.5) rotate(90)" font-family="Liberation Serif" font-size="12">12</text>
<text transform="translate(97.8 354.5) rotate(90)" font-family="Liberation Serif" font-size="12">24</text>
<text transform="translate(97.8 392.5) rotate(90)" font-family="Liberation Serif" font-size="12">36</text>
<text transform="translate(97.8 431.5) rotate(90)" font-family="Liberation Serif" font-size="12">48</text>
<text transform="translate(97.8 469.5) rotate(90)" font-family="Liberation Serif" font-size="12">60</text>
<text transform="translate(97.8 507.5) rotate(90)" font-family="Liberation Serif" font-size="12">72</text>
<text transform="translate(97.8 546.5) rotate(90)" font-family="Liberation Serif" font-size="12">84</text>
<text transform="translate(97.8 584.5) rotate(90)" font-family="Liberation Serif" font-size="12">96</text>
<text transform="translate(97.8 622.5) rotate(90)" font-family="Liberation Serif" font-size="12">108</text>
<text transform="translate(97.8 661.5) rotate(90)" font-family="Liberation Serif" font-size="12">120</text>
</g>
<rect x="285" y="275" width="256" height="384" fill="#fff"/>
<rect x="724" y="192" width="2" height="411" fill="#7a7a7a"/>
<rect x="733" y="175" width="4" height="515" fill="#fbfbfb"/>
<rect x="742" y="148" width="18" height="18" rx="3" fill="#111"/><path d="M745.5 152.3H747.5M749.5 152.3H756.5M745.5 157H747.5M749.5 157H756.5M745.5 161.7H747.5M749.5 161.7H756.5" stroke="#fff" stroke-width="1.8"/>
<rect x="816" y="150" width="18.5" height="18.5" rx="1.5" fill="none" stroke="#111" stroke-width="2"/><path d="M816 154.5H834.5" stroke="#111" stroke-width="2"/><rect x="819" y="158" width="5" height="7.5" fill="none" stroke="#111" stroke-width="1.6"/><rect x="826.5" y="158" width="5" height="7.5" fill="none" stroke="#111" stroke-width="1.6"/>
<path d="M899 148.5L908.8 154.5H889.3Z" fill="#111"/><circle cx="899" cy="152.2" r="1.2" fill="#fff"/><rect x="889.5" y="155" width="19" height="1.6" fill="#111"/><rect x="891" y="157.5" width="2.6" height="7.5" fill="#111"/><rect x="895" y="157.5" width="2.6" height="7.5" fill="#111"/><rect x="899.5" y="157.5" width="2.6" height="7.5" fill="#111"/><rect x="904" y="157.5" width="2.6" height="7.5" fill="#111"/><rect x="889.5" y="165.5" width="19" height="2.2" fill="#111"/>
<path d="M1010 190.5H1017L1013.5 194.5Z" fill="#111"/>
<path d="M737.5 209.5H1028.5" stroke="#878787" stroke-width="1"/>
<path d="M133.75 693V712" stroke="#9ab3d6" stroke-width="1.2"/>
<path d="M211.25 693V712" stroke="#9ab3d6" stroke-width="1.2"/>
<path d="M303.6 693V712" stroke="#9ab3d6" stroke-width="1.2"/>
<path d="M505.2 693V712" stroke="#9ab3d6" stroke-width="1.2"/>
</svg>
<div class="t" style="left:29px;top:6.5px;font-size:12px;line-height:12px;color:#858585;font-weight:normal;">神奇条码标签打印系统 6.0 - 未命名1.lbcp*</div>
<div class="t" style="left:9px;top:36px;font-size:12px;line-height:12px;color:#000;font-weight:normal;">文件(F)</div>
<div class="t" style="left:62px;top:36px;font-size:12px;line-height:12px;color:#000;font-weight:normal;">编辑(E)</div>
<div class="t" style="left:117px;top:36px;font-size:12px;line-height:12px;color:#000;font-weight:normal;">视图(V)</div>
<div class="t" style="left:174px;top:36px;font-size:12px;line-height:12px;color:#000;font-weight:normal;">对象(O)</div>
<div class="t" style="left:232px;top:36px;font-size:12px;line-height:12px;color:#000;font-weight:normal;">数据源(D)</div>
<div class="t" style="left:301px;top:36px;font-size:12px;line-height:12px;color:#000;font-weight:normal;">打印(P)</div>
<div class="t" style="left:356px;top:36px;font-size:12px;line-height:12px;color:#000;font-weight:normal;">工具(T)</div>
<div class="t" style="left:410px;top:36px;font-size:12px;line-height:12px;color:#000;font-weight:normal;">帮助(H)</div>
<div class="t" style="left:977px;top:36px;font-size:12px;line-height:12px;color:#000;font-weight:normal;">永久授权</div>
<div class="t" style="left:5.5px;top:89px;font-size:12px;line-height:12px;color:#000;font-weight:normal;">新建</div>
<div class="t" style="left:40px;top:89px;font-size:12px;line-height:12px;color:#000;font-weight:normal;">打开</div>
<div class="t" style="left:74.5px;top:89px;font-size:12px;line-height:12px;color:#000;font-weight:normal;">保存</div>
<div class="t" style="left:114px;top:89px;font-size:12px;line-height:12px;color:#000;font-weight:normal;">标签尺寸</div>
<div class="t" style="left:178px;top:89px;font-size:12px;line-height:12px;color:#000;font-weight:normal;">设置数据源</div>
<div class="t" style="left:248px;top:89px;font-size:12px;line-height:12px;color:#000;font-weight:normal;">移除数据源</div>
<div class="t" style="left:324px;top:89px;font-size:12px;line-height:12px;color:#000;font-weight:normal;">打印预览</div>
<div class="t" style="left:382px;top:89px;font-size:12px;line-height:12px;color:#000;font-weight:normal;">直接打印</div>
<div class="t" style="left:445.5px;top:89px;font-size:12px;line-height:12px;color:#000;font-weight:normal;">撤销</div>
<div class="t" style="left:480.5px;top:89px;font-size:12px;line-height:12px;color:#767676;font-weight:normal;">重做</div>
<div class="t" style="left:514px;top:89px;font-size:12px;line-height:12px;color:#767676;font-weight:normal;">剪切</div>
<div class="t" style="left:547.5px;top:89px;font-size:12px;line-height:12px;color:#767676;font-weight:normal;">复制</div>
<div class="t" style="left:581px;top:89px;font-size:12px;line-height:12px;color:#000;font-weight:normal;">粘贴</div>
<div class="t" style="left:615.5px;top:89px;font-size:12px;line-height:12px;color:#767676;font-weight:normal;">删除</div>
<div class="t" style="left:655.5px;top:89px;font-size:12px;line-height:12px;color:#000;font-weight:normal;">放大</div>
<div class="t" style="left:689.5px;top:89px;font-size:12px;line-height:12px;color:#000;font-weight:normal;">缩小</div>
<div class="t" style="left:724.5px;top:89px;font-size:12px;line-height:12px;color:#000;font-weight:normal;">实际大小</div>
<div class="t" style="left:782px;top:89px;font-size:12px;line-height:12px;color:#000;font-weight:normal;">适合宽度</div>
<div class="t" style="left:840px;top:89px;font-size:12px;line-height:12px;color:#000;font-weight:normal;">适合高度</div>
<div class="t" style="left:898px;top:89px;font-size:12px;line-height:12px;color:#000;font-weight:normal;">整页显示</div>
<div class="t" style="left:7.5px;top:122px;font-size:12px;line-height:12px;color:#000;font-weight:normal;">对象操作<span class="c" style="width:8px;padding-left:1.5px">:</span></div>
<div class="t" style="left:801px;top:120px;font-size:12px;line-height:12px;color:#000;font-weight:normal;">显示标尺</div>
<div class="t" style="left:884px;top:120px;font-size:12px;line-height:12px;color:#000;font-weight:normal;">显示参考线</div>
<div class="t" style="left:979px;top:120px;font-size:12px;line-height:12px;color:#000;font-weight:normal;">显示网格</div>
<div class="t" style="left:33px;top:155px;font-size:12px;line-height:12px;color:#000;font-weight:normal;">选择</div>
<div class="t" style="left:32.8px;top:187.5px;font-size:12px;line-height:12px;color:#000;font-weight:normal;">单行文字</div>
<div class="t" style="left:32.8px;top:214.5px;font-size:12px;line-height:12px;color:#000;font-weight:normal;">多行文字</div>
<div class="t" style="left:32.8px;top:241.5px;font-size:12px;line-height:12px;color:#000;font-weight:normal;">圆弧文字</div>
<div class="t" style="left:32.8px;top:275px;font-size:12px;line-height:12px;color:#000;font-weight:normal;">条码</div>
<div class="t" style="left:32.8px;top:301.5px;font-size:12px;line-height:12px;color:#000;font-weight:normal;">二维码</div>
<div class="t" style="left:32.8px;top:335px;font-size:12px;line-height:12px;color:#000;font-weight:normal;">图片</div>
<div class="t" style="left:32.8px;top:368.5px;font-size:12px;line-height:12px;color:#000;font-weight:normal;">手绘曲线</div>
<div class="t" style="left:32.8px;top:395px;font-size:12px;line-height:12px;color:#000;font-weight:normal;">直线</div>
<div class="t" style="left:32.8px;top:421px;font-size:12px;line-height:12px;color:#000;font-weight:normal;">三角形</div>
<div class="t" style="left:32.8px;top:448px;font-size:12px;line-height:12px;color:#000;font-weight:normal;">矩形</div>
<div class="t" style="left:32.8px;top:475px;font-size:12px;line-height:12px;color:#000;font-weight:normal;">圆角矩形</div>
<div class="t" style="left:32.8px;top:502px;font-size:12px;line-height:12px;color:#000;font-weight:normal;">圆形</div>
<div class="t" style="left:32.8px;top:529px;font-size:12px;line-height:12px;color:#000;font-weight:normal;">菱形</div>
<div class="t" style="left:32.8px;top:556px;font-size:12px;line-height:12px;color:#000;font-weight:normal;">五角星</div>
<div class="t" style="left:32.8px;top:668.5px;font-size:12px;line-height:12px;color:#000;font-weight:normal;">使用说明</div>
<div class="t" style="left:98.5px;top:154px;font-size:12px;line-height:12px;color:#000;font-weight:normal;">数据源<span class="c" style="width:8px">&nbsp;:</span></div>
<div class="t" style="left:180.5px;top:154px;font-size:12px;line-height:12px;color:#000;font-weight:normal;">首条记录</div>
<div class="t" style="left:258.5px;top:154px;font-size:12px;line-height:12px;color:#000;font-weight:normal;">上一条记录</div>
<div class="t" style="left:327px;top:154px;font-size:12px;line-height:12px;color:#000;font-weight:normal;letter-spacing:0.6px">7 / 29</div>
<div class="t" style="left:393.5px;top:154px;font-size:12px;line-height:12px;color:#000;font-weight:normal;">下一条记录</div>
<div class="t" style="left:486px;top:154px;font-size:12px;line-height:12px;color:#000;font-weight:normal;">末条记录</div>
<div class="t" style="left:570px;top:154px;font-size:12px;line-height:12px;color:#000;font-weight:normal;">跳转到记录</div>
<div class="t" style="left:767px;top:152.5px;font-size:12px;line-height:12px;color:#000;font-weight:normal;">属性栏</div>
<div class="t" style="left:841px;top:152.5px;font-size:12px;line-height:12px;color:#000;font-weight:normal;">模板库</div>
<div class="t" style="left:915px;top:152.5px;font-size:12px;line-height:12px;color:#000;font-weight:normal;">素材库</div>
<div class="t" style="left:749px;top:224px;font-size:15px;line-height:15px;color:#000;font-weight:bold;letter-spacing:1.6px;-webkit-text-stroke:0.25px #000">页面背景属性<span style="letter-spacing:0;padding-left:2px">:</span></div>
<div class="t" style="left:759.5px;top:259.5px;font-size:12px;line-height:12px;color:#000;font-weight:normal;">背景颜色<span class="c" style="width:8px;padding-left:2px">:</span></div>
<div class="t" style="left:759.5px;top:287.5px;font-size:12px;line-height:12px;color:#000;font-weight:normal;">背景图片<span class="c" style="width:8px;padding-left:2px">:</span></div>
<div class="t" style="left:826.5px;top:259.5px;font-size:12px;line-height:12px;color:#000;font-weight:normal;width:160px;text-align:center">背景颜色和透明度...</div>
<div class="t" style="left:826.5px;top:287.3px;font-size:12px;line-height:12px;color:#000;font-weight:normal;width:160px;text-align:center">选择常用背景图片...</div>
<div class="t" style="left:826.5px;top:316.2px;font-size:12px;line-height:12px;color:#000;font-weight:normal;width:160px;text-align:center">选择其它背景图片...</div>
<div class="t" style="left:826.5px;top:345px;font-size:12px;line-height:12px;color:#5e5e5e;font-weight:normal;width:160px;text-align:center">清空背景图片</div>
<div class="t" style="left:741.5px;top:509.5px;font-size:13px;line-height:13px;color:#fff;font-weight:bold;">缩览图</div>
<div class="t" style="left:5.5px;top:698px;font-size:12px;line-height:12px;color:#000;font-weight:normal;">数据源<span class="c" style="width:11.5px;padding-left:1px;box-sizing:border-box">:</span>物料编码.xlsx</div>
<div class="t" style="left:142px;top:698px;font-size:12px;line-height:12px;color:#000;font-weight:normal;">缩放<span class="c" style="width:11.5px;padding-left:1px;box-sizing:border-box">:</span>40%</div>
<div class="t" style="left:219.5px;top:698px;font-size:12px;line-height:12px;color:#000;font-weight:normal;">画布DPI<span class="c" style="width:11.5px;padding-left:1px;box-sizing:border-box">:</span>203</div>
<div class="t" style="left:311.5px;top:698px;font-size:12px;line-height:12px;color:#000;font-weight:normal;word-spacing:1.5px">标签尺寸<span class="c" style="width:11.5px;padding-left:1px;box-sizing:border-box">:</span>80.0 毫米 × 120.0 毫米</div>
<div class="t" style="left:512.5px;top:698px;font-size:12px;line-height:12px;color:#000;font-weight:normal;word-spacing:1.5px">鼠标位置<span class="c" style="width:11.5px;padding-left:1px;box-sizing:border-box">:</span>16.3 毫米<span class="c" style="width:11.5px;padding-left:1px;box-sizing:border-box">,</span>-28.2 毫米</div>
</body></html>
